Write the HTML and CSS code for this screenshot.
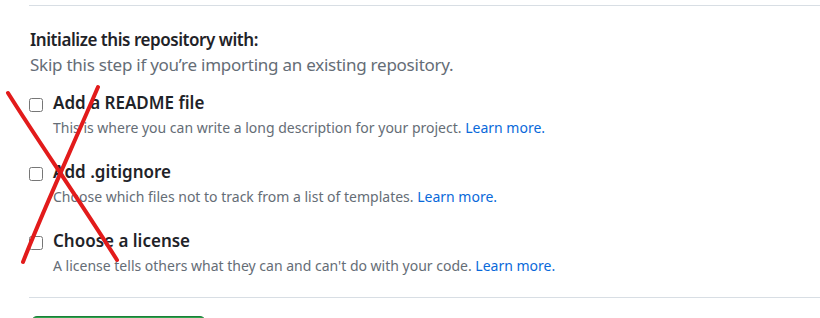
FILE: index.html
```html
<!DOCTYPE html>
<html lang="en">
<head>
    <meta charset="UTF-8">
    <meta name="viewport" content="width=device-width, initial-scale=1.0">
    <title>Create a new repository</title>
    <link rel="stylesheet" href="styles.css">
</head>
<body>
    <div class="form-section">
        <div class="divider"></div>

        <div class="init-block">
            <h3 class="init-title">Initialize this repository with:</h3>
            <p class="init-note">Skip this step if you’re importing an existing repository.</p>

            <div class="option">
                <input type="checkbox" id="readme" class="option-check">
                <div class="option-body">
                    <label for="readme" class="option-label">Add a README file</label>
                    <div class="option-desc">This is where you can write a long description for your project. <a href="#">Learn more.</a></div>
                </div>
            </div>

            <div class="option">
                <input type="checkbox" id="gitignore" class="option-check">
                <div class="option-body">
                    <label for="gitignore" class="option-label">Add .gitignore</label>
                    <div class="option-desc">Choose which files not to track from a list of templates. <a href="#">Learn more.</a></div>
                </div>
            </div>

            <div class="option">
                <input type="checkbox" id="license" class="option-check">
                <div class="option-body">
                    <label for="license" class="option-label">Choose a license</label>
                    <div class="option-desc">A license tells others what they can and can't do with your code. <a href="#">Learn more.</a></div>
                </div>
            </div>

            <!-- red cross drawn over the options -->
            <svg class="scribble" width="130" height="190" viewBox="0 0 130 190">
                <path d="M8 7 C 38 55, 80 115, 117 174" />
                <path d="M98 1 C 72 62, 44 122, 23 176" />
            </svg>
        </div>

        <div class="divider"></div>

        <button class="create-btn">Create repository</button>
    </div>
</body>
</html>
```

FILE: styles.css
```css
body {
    margin: 0;
    font-family: "Noto Sans", "Open Sans", sans-serif;
    background-color: #ffffff;
    color: #1f2328;
}
.form-section {
    padding-left: 29px;
    padding-top: 5px;
}
.divider {
    border-top: 1px solid #d8dee4;
}
.init-block {
    position: relative;
    padding: 22px 0 20px 1px;
}
.init-title {
    margin: 0;
    font-size: 17px;
    font-weight: 600;
    line-height: 24px;
    letter-spacing: -0.45px;
}
.init-note {
    margin: 1px 0 0;
    font-size: 17px;
    line-height: 24px;
    letter-spacing: -0.25px;
    color: #656d76;
}
.option {
    display: flex;
    align-items: flex-start;
    margin-top: 15px;
}
.option + .option {
    margin-top: 22px;
}
.option-check {
    margin: 6px 10px 0 -1px;
    width: 14px;
    height: 14px;
}
.option-label {
    display: block;
    font-size: 17px;
    font-weight: 600;
    line-height: 22px;
}
.option-desc {
    margin-top: 3px;
    font-size: 14px;
    line-height: 22px;
    color: #656d76;
}
.option-desc a {
    color: #0969da;
    text-decoration: none;
}
.scribble {
    position: absolute;
    left: -29px;
    top: 80px;
    overflow: visible;
}
.scribble path {
    fill: none;
    stroke: #e21b1b;
    stroke-width: 4;
    stroke-linecap: round;
}
.create-btn {
    margin-top: 18px;
    margin-left: 2px;
    width: 175px;
    height: 32px;
    border: 1px solid #1a7f37;
    border-radius: 6px;
    background-color: #2da44e;
    color: #ffffff;
    font-family: inherit;
    font-size: 14px;
    font-weight: 600;
}
```
